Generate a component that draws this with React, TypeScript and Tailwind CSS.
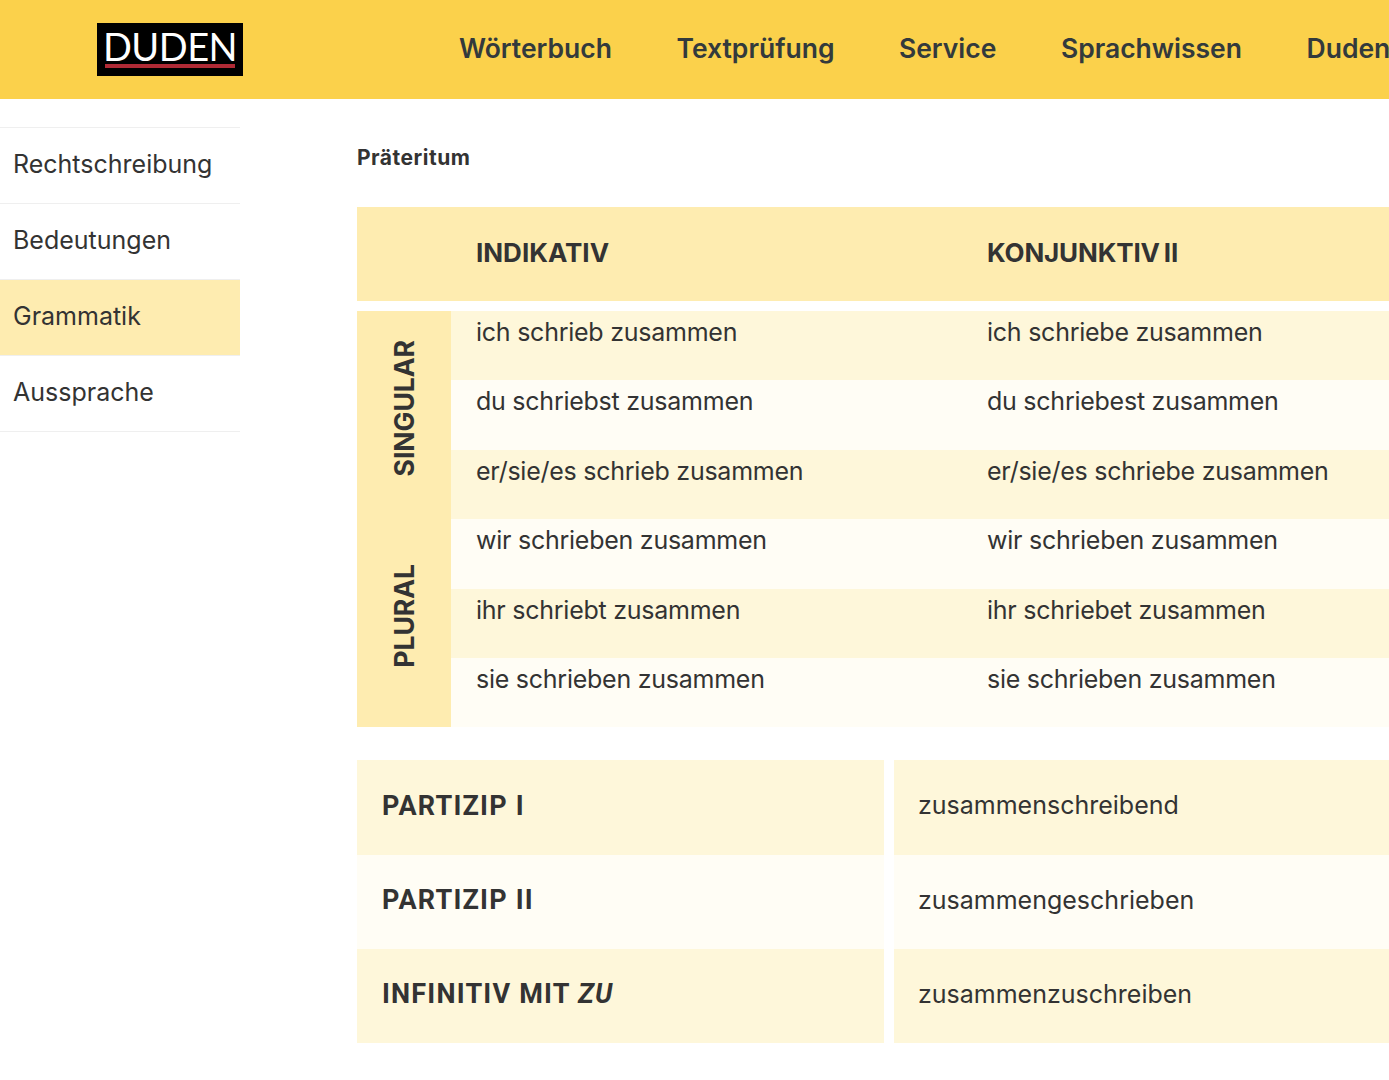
const F = "font-['Inter',sans-serif]";
const nav = ["Wörterbuch", "Textprüfung", "Service", "Sprachwissen", "Duden"];
const side = ["Rechtschreibung", "Bedeutungen", "Grammatik", "Aussprache"];
const rows = [
  ["ich schrieb zusammen", "ich schriebe zusammen"],
  ["du schriebst zusammen", "du schriebest zusammen"],
  ["er/sie/es schrieb zusammen", "er/sie/es schriebe zusammen"],
  ["wir schrieben zusammen", "wir schrieben zusammen"],
  ["ihr schriebt zusammen", "ihr schriebet zusammen"],
  ["sie schrieben zusammen", "sie schrieben zusammen"],
];

function Vertical({ label, h }: { label: string; h: string }) {
  return (
    <div className={`${h} flex items-center justify-center`}>
      <span className="[writing-mode:vertical-rl] rotate-180 text-[26.5px] font-bold leading-none text-[#333333]">{label}</span>
    </div>
  );
}

export default function App() {
  return (
    <div className={`${F} w-[1389px] h-[1080px] overflow-hidden bg-white text-[#333333]`}>
      <header className="h-[99px] bg-[#fbd14b] flex items-center pl-[97px]">
        <div className="w-[146px] h-[53px] bg-black flex flex-col items-center pt-[7px] shrink-0">
          <span className="font-['Lato',sans-serif] text-[38px] leading-[32px] text-white tracking-[-0.5px]">DUDEN</span>
          <div className="w-[130px] h-[4px] bg-[#b02a35] mt-[2px]" />
        </div>
        <nav className="flex gap-[64.5px] ml-[216px] whitespace-nowrap pb-[2px]">
          {nav.map((n) => (
            <span key={n} className="text-[26.5px] font-semibold text-[#333a3c]">{n}</span>
          ))}
        </nav>
      </header>
      <div className="flex">
        <aside className="w-[240px] mt-[28px] shrink-0 border-t border-[#efefef]">
          {side.map((s) => (
            <div key={s} className={`h-[76px] pl-[13px] pt-[18px] border-b border-[#efefef] text-[25px] leading-[37px] ${s === "Grammatik" ? "bg-[#feecb0]" : ""}`}>{s}</div>
          ))}
        </aside>
        <main className="ml-[117px] w-[1032px] shrink-0">
          <h2 className="mt-[47px] h-[61px] text-[21px] leading-[24px] tracking-[0.5px] font-bold">Präteritum</h2>
          <div className="h-[94px] bg-[#feecb0] flex pl-[119px] pt-[28px] text-[26px] font-bold leading-[36px]">
            <div className="w-[511px]">INDIKATIV</div>
            <div className="tracking-[-0.15px] [word-spacing:-2px]">KONJUNKTIV II</div>
          </div>
          <div className="flex mt-[10px]">
            <div className="w-[94px] bg-[#feecb0] shrink-0 flex flex-col">
              <Vertical label="SINGULAR" h="h-[194px]" />
              <Vertical label="PLURAL" h="h-[222px]" />
            </div>
            <div className="flex-1">
              {rows.map((r, i) => (
                <div key={r[0]} className={`h-[69.4px] flex pl-[25px] pt-[3px] text-[25px] tracking-[-0.25px] leading-[36px] ${i % 2 === 0 ? "bg-[#fef7da]" : "bg-[#fffdf5]"}`}>
                  <div className="w-[511px]">{r[0]}</div>
                  <div>{r[1]}</div>
                </div>
              ))}
            </div>
          </div>
          <div className="mt-[33px] flex flex-col">
            {[
              [<>PARTIZIP I</>, "zusammenschreibend"],
              [<>PARTIZIP II</>, "zusammengeschrieben"],
              [<>INFINITIV MIT <em>ZU</em></>, "zusammenzuschreiben"],
            ].map((r, i) => (
              <div key={i} className="flex gap-[10px] h-[94.3px]">
                <div className={`w-[527px] pl-[25px] flex items-center pb-[3px] font-['Roboto',sans-serif] font-bold text-[27px] tracking-[1.2px] ${i % 2 === 0 ? "bg-[#fef7da]" : "bg-[#fffdf5]"}`}>
                  <span className="whitespace-pre">{r[0]}</span>
                </div>
                <div className={`flex-1 pl-[24px] flex items-center pb-[3px] text-[25px] ${i % 2 === 0 ? "bg-[#fef7da]" : "bg-[#fffdf5]"}`}>{r[1]}</div>
              </div>
            ))}
          </div>
        </main>
      </div>
    </div>
  );
}
